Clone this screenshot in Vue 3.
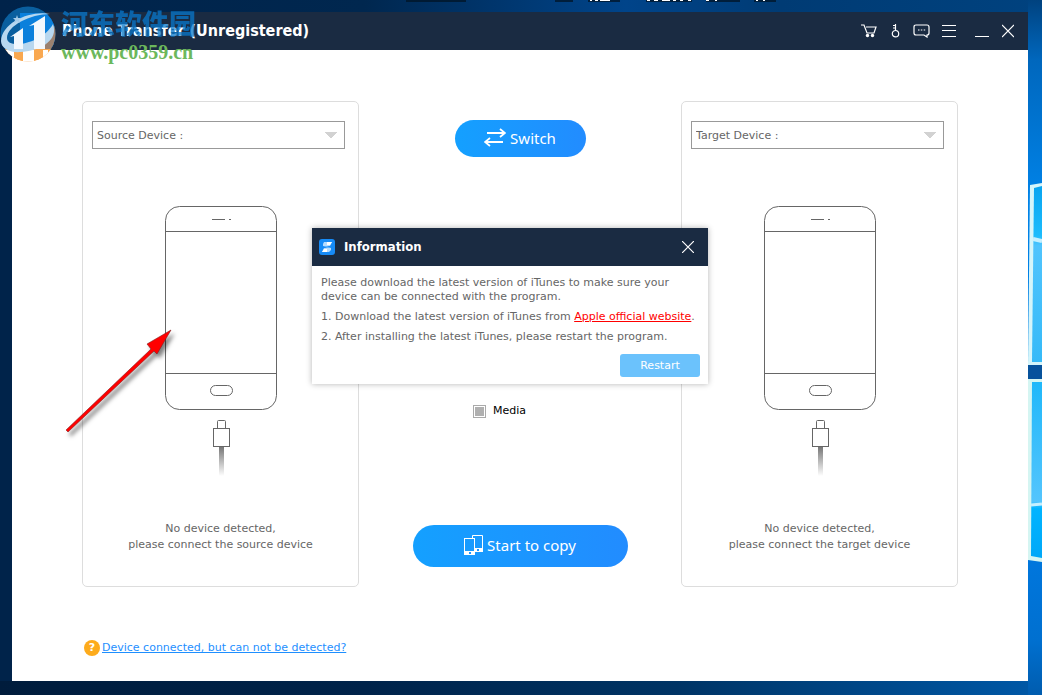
<script setup>
import { ref } from 'vue'

const devices = [
  { id: 'source', label: 'Source Device :', hint: 'please connect the source device' },
  { id: 'target', label: 'Target Device :', hint: 'please connect the target device' },
]
const dialogOpen = ref(true)
</script>

<template>
  <div class="desktop">
    <svg class="labels" width="380" height="5" viewBox="0 0 380 5" aria-hidden="true">
      <g fill="#001426" opacity="0.75">
        <rect x="6" width="60" height="2" />
        <rect x="155" width="18" height="2" />
        <rect x="188" width="32" height="2" />
        <rect x="246" width="46" height="2" />
        <rect x="306" width="34" height="2" />
        <rect x="354" width="22" height="2" />
      </g>
      <path d="M190 0h2M195 0h3M200 0h10M247 0h3M254 0h4M262 0h8M273 0h3M280 0h3M288 0h3M306 0h3M315 0h2M356 0h2M363 0h2" stroke="#fff" stroke-width="2" />
    </svg>
    <svg class="panes" width="14" height="379" viewBox="0 0 14 379" aria-hidden="true">
      <defs>
        <linearGradient id="paneTop" x1="0" y1="0" x2="0" y2="1">
          <stop offset="0" stop-color="#08a4f0" />
          <stop offset="0.28" stop-color="#1cbcfc" />
          <stop offset="0.34" stop-color="#50c4fd" />
          <stop offset="1" stop-color="#35baf8" />
        </linearGradient>
        <linearGradient id="paneLow" x1="0" y1="0" x2="0" y2="1">
          <stop offset="0" stop-color="#20b8fa" />
          <stop offset="0.68" stop-color="#54c5fd" />
          <stop offset="0.72" stop-color="#00b4ff" />
          <stop offset="1" stop-color="#00a8f8" />
        </linearGradient>
      </defs>
      <path d="M2 2 14 0V182H0z" fill="#d5f5fa" />
      <path d="M6 5 14 3V179H4z" fill="url(#paneTop)" />
      <path d="M5 56 14 58" stroke="#c5f0ff" stroke-width="4" />
      <rect y="182" width="14" height="14" fill="#07529c" />
      <path d="M0 196H14V379L0 377z" fill="#d5f5f2" />
      <path d="M4 199H14V375L3 373z" fill="url(#paneLow)" />
      <path d="M3 322 14 321" stroke="#c5f0ff" stroke-width="3" />
    </svg>

    <div class="window">
      <header class="titlebar">
        <h1>Phone Transfer (Unregistered)</h1>
        <nav class="tools" aria-label="Window tools">
          <button type="button" aria-label="Store">
            <svg width="18" height="14" viewBox="0 0 18 14" fill="none" stroke="#fff" stroke-width="1.2">
              <path d="M0 1h3l3 8h7l2-6H5" />
              <circle cx="6.500" cy="11.500" r="1.700" fill="#fff" stroke="none" />
              <circle cx="11.500" cy="11.500" r="1.700" fill="#fff" stroke="none" />
            </svg>
          </button>
          <button type="button" aria-label="Register">
            <svg width="9" height="14" viewBox="0 0 9 14" fill="none" stroke="#fff" stroke-width="1.2">
              <circle cx="4.500" cy="9.700" r="3.200" />
              <path d="M4.500 6.500V0M4.500 1.500H2M4.500 4H2" />
            </svg>
          </button>
          <button type="button" aria-label="Feedback">
            <svg width="18" height="14" viewBox="0 0 18 14" fill="none" stroke="#fff" stroke-width="1.2">
              <path d="M4 1h11q2 0 2 2v6q0 2-2 2v2l-3-2H4q-2 0-2-2V3q0-2 2-2z" />
              <path d="M6 6h1.500M8.800 6h1.500M11.700 6H13.200" />
            </svg>
          </button>
          <button type="button" aria-label="Menu">
            <svg width="14" height="14" viewBox="0 0 14 14" stroke="#fff" stroke-width="1">
              <path d="M0 1.500h14M0 6.500h14M0 12.500h14" />
            </svg>
          </button>
          <button type="button" class="min" aria-label="Minimize">
            <svg width="14" height="14" viewBox="0 0 14 14" stroke="#fff" stroke-width="1"><path d="M0 12.500h14" /></svg>
          </button>
          <button type="button" aria-label="Close">
            <svg width="12" height="14" viewBox="0 0 12 14" stroke="#fff" stroke-width="1.200"><path d="M0 1l12 12M12 1 0 13" /></svg>
          </button>
        </nav>
      </header>

      <main>
        <div class="columns">
          <section v-for="d in devices" :key="d.id" class="card" :class="d.id">
            <select :aria-label="d.label">
              <option>{{ d.label }}</option>
            </select>
            <svg class="phone" width="112" height="270" viewBox="0 0 112 270" fill="none" stroke="#666" aria-hidden="true">
              <defs>
                <linearGradient :id="d.id + 'Cable'" x1="0" y1="0" x2="0" y2="1">
                  <stop offset="0" stop-color="#777" />
                  <stop offset="1" stop-color="#fff" />
                </linearGradient>
              </defs>
              <rect x="0.500" y="0.500" width="111" height="203" rx="14" />
              <path d="M0 25.500h112M0 167.500h112M47 13.500h13M64 13.500h2" />
              <rect x="45.500" y="179.500" width="22" height="10" rx="5" />
              <path d="M52.500 222.500v-7q0-1 1-1h6q1 0 1 1v7" />
              <rect x="48.500" y="222.500" width="16" height="18" />
              <rect x="54" y="241" width="5" height="29" :fill="`url(#${d.id}Cable)`" stroke="none" />
            </svg>
            <p>No device detected,<br>{{ d.hint }}</p>
          </section>

          <div class="middle">
            <button type="button" class="pill switch">
              <svg width="22" height="19" viewBox="0 0 22 19" fill="none" stroke="#fff" stroke-width="1.800">
                <path d="M3 5h18M16 1l5 4-5 4M19 14H1M6 10l-5 4 5 4" />
              </svg>
              Switch
            </button>
            <label class="media">
              <input type="checkbox">
              Media
            </label>
            <button type="button" class="pill copy">
              <svg width="19" height="20" viewBox="0 0 19 20" fill="none" stroke="#fff">
                <path d="M8.500 3V.500h10v16H11" />
                <path d="M11 13h8v4h-8z" fill="#fff" stroke="none" />
                <rect x="0.500" y="3.500" width="10" height="16" />
                <path d="M0 16h11v4H0z" fill="#fff" stroke="none" />
                <path d="M5 17h2v2H5zM13 14h2v2h-2z" fill="#1c96ff" stroke="none" />
              </svg>
              Start to copy
            </button>
          </div>
        </div>

        <footer>
          <span class="badge" aria-hidden="true">?</span>
          <a href="#">Device connected, but can not be detected?</a>
        </footer>
      </main>

      <div v-if="dialogOpen" class="dialog" role="dialog" aria-labelledby="dialogTitle">
        <div class="dialog-bar">
          <svg width="16" height="16" viewBox="0 0 16 16" aria-hidden="true">
            <rect width="16" height="16" rx="3" fill="#168bf7" />
            <path d="M5 3h8l-2 4H4V5z" fill="#b5dcff" />
            <path d="M8 3h5l-2 3H8z" fill="#fff" />
            <path d="M12 9v2l-2 2H3l2-4z" fill="#b5dcff" />
            <path d="M8 10v3H3l2-3z" fill="#fff" />
            <path d="M4 7h4l4 2H8z" fill="#5db2ff" />
          </svg>
          <h2 id="dialogTitle">Information</h2>
          <button type="button" aria-label="Close dialog" @click="dialogOpen = false">
            <svg width="12" height="12" viewBox="0 0 12 12" stroke="#fff" stroke-width="1.200"><path d="M0 0l12 12M12 0 0 12" /></svg>
          </button>
        </div>
        <div class="dialog-body">
          <p>Please download the latest version of iTunes to make sure your device can be connected with the program.</p>
          <p>1. Download the latest version of iTunes from <a href="#">Apple official website</a>.</p>
          <p>2. After installing the latest iTunes, please restart the program.</p>
          <button type="button" class="restart">Restart</button>
        </div>
      </div>
    </div>

    <svg class="arrow" width="116" height="116" viewBox="0 0 116 116" aria-hidden="true">
      <path d="M6 106 91 25 87 20 111 6 97 30 94 27 8 108z" fill="#f00" stroke="#802020" stroke-width="0.600" />
    </svg>

    <div class="watermark">
      <svg width="57" height="58" viewBox="0 0 57 58" aria-hidden="true">
        <defs>
          <clipPath id="disc"><circle cx="28" cy="29" r="27.500" /></clipPath>
        </defs>
        <g clip-path="url(#disc)">
          <rect width="57" height="45" fill="#0a5f9f" />
          <path d="M20 8h31q4 0 4 4v30H20z" fill="#0b80dc" />
          <path d="M0 44h57v14H0z" fill="#f9a850" />
          <path d="M30 44 57 18V44z" fill="#9a8170" />
          <path d="M14 45h9v13h-9zM34 45h9v13h-9z" fill="#f9a850" />
          <path d="M23 45h11v13H23zM0 45h14v13H0zM43 45h5v13h-5z" fill="#fff" />
        </g>
        <path d="M1 36C2 17 31 5 50 9c-20 0-43 12-43 24 0 12 35 6 46-14 6 17-14 27-32 28C9 48 1 43 1 36z" fill="#b7d7ef" />
        <path d="M10 32 23 23V44h-9V31zM29 21 45 11V44H34V20z" fill="#f2f8fd" />
        <path d="M17 10l1 3h3l-2 2 1 3-3-2-3 2 1-3-2-2h3z" fill="#a5cbe9" />
      </svg>
      <div class="mark-text">
        <span class="site">河东软件园</span>
        <span class="url">www.pc0359.cn</span>
      </div>
    </div>
  </div>
</template>

<style>
body {
  margin: 0;
}
</style>

<style scoped>
* {
  box-sizing: border-box;
}
.desktop {
  position: relative;
  display: flex;
  min-height: 100vh;
  padding: 12px 14px 14px 12px;
  overflow: hidden;
  font: 11px/14px "DejaVu Sans", "Noto Sans", sans-serif;
  color: #666;
  background:
    linear-gradient(180deg, #00427f 0, #0067bd 60px, #0083e8 200px, #0078e0 540px, #0070d0 640px, #005cae 100%) right / 14px 100% no-repeat,
    linear-gradient(90deg, #00234a 0, #00274f 35%, #00448a 60%, #003b74 75%, #00427f 100%) top / 100% 12px no-repeat,
    linear-gradient(90deg, #001c3c 0, #00234a 35%, #003465 65%, #0059a8 100%) bottom / 100% 14px no-repeat,
    #00234a;
}
button {
  font: inherit;
  padding: 0;
  border: 0;
  background: none;
  cursor: pointer;
}
svg {
  display: block;
  flex: none;
}
h1,
h2,
p {
  margin: 0;
}
h1,
h2 {
  font-family: "DejaVu Sans Condensed", "Noto Sans", sans-serif;
}
.labels {
  position: absolute;
  top: 0;
  left: 400px;
}
.panes {
  position: absolute;
  top: 183px;
  right: 0;
}
.window {
  position: relative;
  flex: 1;
  display: flex;
  flex-direction: column;
  background: #fff;
}
.titlebar {
  display: flex;
  align-items: center;
  justify-content: space-between;
  height: 38px;
  padding: 0 14px 0 50px;
  color: #fff;
  background: #1a2b42;
}
h1 {
  font-size: 16px;
  line-height: 20px;
}
.tools {
  display: flex;
  align-items: center;
  gap: 12px;
}
.min {
  margin: 0 1px 0 7px;
}
main {
  flex: 1;
  display: flex;
  flex-direction: column;
  padding: 51px 70px 24px;
}
.columns {
  display: grid;
  grid-template-columns: 277fr 322fr 277fr;
  grid-template-areas: "source middle target";
}
.source {
  grid-area: source;
}
.target {
  grid-area: target;
}
.card {
  display: flex;
  flex-direction: column;
  align-items: center;
  min-height: 486px;
  padding: 19px 13px 30px 9px;
  border: 1px solid #ddd;
  border-radius: 5px;
}
select {
  width: 100%;
  height: 28px;
  padding: 2px 24px 0 4px;
  font: inherit;
  color: #666;
  border: 1px solid #999;
  border-radius: 0;
  appearance: none;
  background: conic-gradient(from -41deg at 50% 100%, #d2d2d2 82deg, transparent 0) right 7px center / 12px 7px no-repeat #fff;
}
.phone {
  margin: 57px 0 45px 4px;
}
.card p {
  margin-left: 4px;
  line-height: 16px;
  text-align: center;
}
.middle {
  grid-area: middle;
  display: flex;
  flex-direction: column;
  align-items: center;
  padding: 19px 0 20px;
}
.pill {
  display: flex;
  align-items: center;
  justify-content: center;
  gap: 4px;
  padding-bottom: 2px;
  color: #fff;
  font-family: "Noto Sans", sans-serif;
  font-size: 15px;
  line-height: 20px;
  border-radius: 21px;
  background: linear-gradient(90deg, #14a0ff, #228cff);
}
.switch {
  width: 131px;
  height: 37px;
}
.copy {
  width: 215px;
  height: 42px;
  margin-top: auto;
}
.media {
  display: flex;
  align-items: center;
  gap: 7px;
  margin: 247px 41px 0 0;
  color: #000;
}
.media input {
  appearance: none;
  width: 13px;
  height: 13px;
  margin: 0;
  border: 1px solid #aaa;
  background: #b0b0b0;
  box-shadow: inset 0 0 0 1px #fff;
}
footer {
  display: flex;
  align-items: center;
  gap: 2px;
  margin: 53px 0 0 2px;
}
footer a {
  color: #1e8fff;
}
.badge {
  width: 16px;
  height: 16px;
  border-radius: 50%;
  color: #fff;
  font-weight: bold;
  line-height: 16px;
  text-align: center;
  background: #fdab1c;
}
.dialog {
  position: absolute;
  top: 216px;
  left: calc(50% - 208px);
  width: 396px;
  background: #fff;
  box-shadow: 0 0 6px rgba(0, 0, 0, 0.3);
}
.dialog-bar {
  display: flex;
  align-items: center;
  gap: 9px;
  height: 38px;
  padding: 0 14px 0 7px;
  color: #fff;
  background: #1a2b42;
}
.dialog-bar button {
  margin-left: auto;
}
h2 {
  font-size: 13px;
  line-height: 16px;
}
.dialog-body {
  display: flex;
  flex-direction: column;
  gap: 6px;
  padding: 10px 8px 7px 9px;
}
.dialog-body a {
  color: #f00;
}
.restart {
  align-self: flex-end;
  width: 80px;
  height: 23px;
  margin-top: 4px;
  color: #fff;
  border-radius: 3px;
  background: #6bc2fc;
}
.arrow {
  position: absolute;
  top: 324px;
  left: 60px;
  filter: drop-shadow(3px 4px 2px rgba(0, 0, 0, 0.5));
}
.watermark {
  position: absolute;
  top: 5px;
  left: 0;
  display: flex;
  gap: 4px;
  pointer-events: none;
}
.mark-text {
  display: flex;
  flex-direction: column;
  gap: 5px;
  padding-top: 4px;
}
.site {
  color: #0878cc;
  font: 900 27px/28px "Noto Sans CJK SC", sans-serif;
  opacity: 0.75;
}
.url {
  color: #6cb85c;
  font: bold 20px/20px "Liberation Serif", serif;
}
</style>
